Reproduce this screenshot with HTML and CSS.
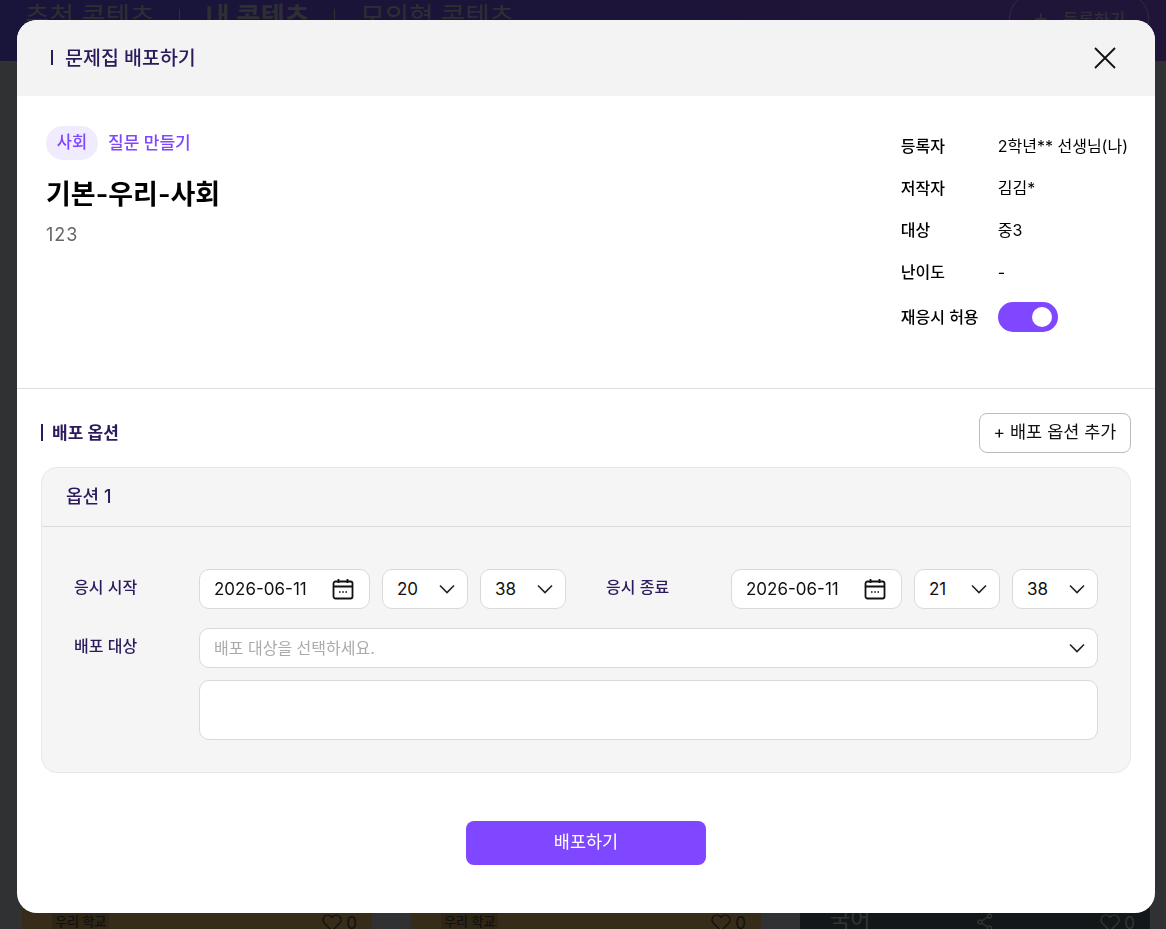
FILE: index.html
```html
<!DOCTYPE html>
<html lang="ko">

<head>
  <meta charset="UTF-8">
  <meta name="viewport" content="width=device-width, initial-scale=1.0">
  <title>문제집 배포하기</title>
  <link rel="stylesheet" href="styles.css">
</head>

<body>
  <!-- page behind the modal -->
  <div class="page">
    <div class="topbar">
      <div class="tabs">
        <span class="tab">추천 콘텐츠</span>
        <span class="tab_line"></span>
        <span class="tab tab_on">내 콘텐츠</span>
        <span class="tab_line"></span>
        <span class="tab">모의형 콘텐츠</span>
      </div>
      <div class="add_btn"><span class="add_plus">+</span>등록하기</div>
    </div>

    <div class="cards">
      <div class="card card_yellow">
        <span class="chip">우리 학교</span>
        <span class="likes">
          <svg width="20" height="18" viewBox="0 0 20 18"><path d="M10 17 2.4 9.3a4.8 4.8 0 0 1 6.8-6.8l.8.8.8-.8a4.8 4.8 0 0 1 6.8 6.8z" fill="none" stroke="#111" stroke-width="1.4"/></svg>
          0
        </span>
      </div>
      <div class="card card_yellow">
        <span class="chip">우리 학교</span>
        <span class="likes">
          <svg width="20" height="18" viewBox="0 0 20 18"><path d="M10 17 2.4 9.3a4.8 4.8 0 0 1 6.8-6.8l.8.8.8-.8a4.8 4.8 0 0 1 6.8 6.8z" fill="none" stroke="#111" stroke-width="1.4"/></svg>
          0
        </span>
      </div>
      <div class="card card_dark">
        <span class="subject">국어</span>
        <svg class="share" width="16" height="18" viewBox="0 0 16 18"><circle cx="12.5" cy="3" r="2" fill="none" stroke="#333" stroke-width="1.4"/><circle cx="3" cy="9" r="2" fill="none" stroke="#333" stroke-width="1.4"/><circle cx="12.5" cy="15" r="2" fill="none" stroke="#333" stroke-width="1.4"/><path d="M4.8 8 10.7 4M4.8 10l5.9 4" stroke="#333" stroke-width="1.4"/></svg>
        <span class="likes likes_dark">
          <svg width="20" height="18" viewBox="0 0 20 18"><path d="M10 17 2.4 9.3a4.8 4.8 0 0 1 6.8-6.8l.8.8.8-.8a4.8 4.8 0 0 1 6.8 6.8z" fill="none" stroke="#333" stroke-width="1.4"/></svg>
          0
        </span>
      </div>
    </div>
  </div>

  <div class="modal">
    <div class="modal_head">
      <h1 class="modal_title"><span class="lift">문제집 배포하기</span></h1>
      <svg class="close" width="22" height="22" viewBox="0 0 22 22"><path d="M1 1 21 21M21 1 1 21" stroke="#111" stroke-width="1.8"/></svg>
    </div>

    <div class="info">
      <div class="info_left">
        <div class="tags">
          <span class="tag">사회</span>
          <span class="tag_text lift">질문 만들기</span>
        </div>
        <h2 class="book_name">기본-우리-사회</h2>
        <p class="book_desc">123</p>
      </div>
      <div class="meta">
        <span class="meta_key">등록자</span><span class="meta_val">2학년** 선생님(나)</span>
        <span class="meta_key">저작자</span><span class="meta_val">김김*</span>
        <span class="meta_key">대상</span><span class="meta_val">중3</span>
        <span class="meta_key">난이도</span><span class="meta_val">-</span>
        <span class="meta_key">재응시 허용</span><span class="toggle"><span class="knob"></span></span>
      </div>
    </div>

    <div class="options">
      <div class="options_head">
        <h3 class="options_title"><span class="lift">배포 옵션</span></h3>
        <button class="option_add" type="button">+ 배포 옵션 추가</button>
      </div>

      <div class="option_box">
        <div class="option_name">옵션 1</div>
        <div class="option_body">
          <div class="form_row">
            <span class="form_label">응시 시작</span>
            <div class="field field_date">2026-06-11
              <svg width="22" height="22" viewBox="0 0 22 22"><rect x="1.5" y="3.5" width="19" height="17" rx="2" fill="none" stroke="#111" stroke-width="1.8"/><path d="M1.5 8.5h19M6.5 1v4M15.5 1v4" stroke="#111" stroke-width="1.8"/><path d="M7 14h1.6M10.2 14h1.6M13.4 14H15" stroke="#111" stroke-width="1.5"/></svg>
            </div>
            <div class="field field_time">20
              <svg width="16" height="10" viewBox="0 0 16 10"><path d="M1 1.5 8 8.5l7-7" fill="none" stroke="#222" stroke-width="1.6"/></svg>
            </div>
            <div class="field field_time">38
              <svg width="16" height="10" viewBox="0 0 16 10"><path d="M1 1.5 8 8.5l7-7" fill="none" stroke="#222" stroke-width="1.6"/></svg>
            </div>
            <span class="form_label form_label_end">응시 종료</span>
            <div class="field field_date">2026-06-11
              <svg width="22" height="22" viewBox="0 0 22 22"><rect x="1.5" y="3.5" width="19" height="17" rx="2" fill="none" stroke="#111" stroke-width="1.8"/><path d="M1.5 8.5h19M6.5 1v4M15.5 1v4" stroke="#111" stroke-width="1.8"/><path d="M7 14h1.6M10.2 14h1.6M13.4 14H15" stroke="#111" stroke-width="1.5"/></svg>
            </div>
            <div class="field field_time">21
              <svg width="16" height="10" viewBox="0 0 16 10"><path d="M1 1.5 8 8.5l7-7" fill="none" stroke="#222" stroke-width="1.6"/></svg>
            </div>
            <div class="field field_time">38
              <svg width="16" height="10" viewBox="0 0 16 10"><path d="M1 1.5 8 8.5l7-7" fill="none" stroke="#222" stroke-width="1.6"/></svg>
            </div>
          </div>

          <div class="form_row form_row_target">
            <span class="form_label">배포 대상</span>
            <div class="target_col">
              <div class="field field_target"><span class="lift">배포 대상을 선택하세요.</span>
                <svg width="16" height="10" viewBox="0 0 16 10"><path d="M1 1.5 8 8.5l7-7" fill="none" stroke="#222" stroke-width="1.6"/></svg>
              </div>
              <div class="target_list"></div>
            </div>
          </div>
        </div>
      </div>
    </div>

    <div class="modal_foot">
      <button class="submit" type="button">배포하기</button>
    </div>
  </div>
</body>

</html>
```

FILE: styles.css
```css
* {
  box-sizing: border-box;
}

html,
body {
  margin: 0;
  height: 100%;
  overflow: hidden;
}

body {
  font-family: Inter, "Noto Sans CJK KR", sans-serif;
  background-color: #2f3133;
  color: #000;
}

h1,
h2,
h3,
p {
  margin: 0;
}

/* text sits a little high in its line */
.lift {
  padding-bottom: 3px;
}

/* page behind */
.page {
  height: 929px;
  display: flex;
  flex-direction: column;
  justify-content: space-between;
  overflow: hidden;
}

.topbar {
  height: 61px;
  flex: none;
  display: flex;
  justify-content: space-between;
  align-items: flex-start;
  padding: 3px 17px 0 25px;
  background: linear-gradient(90deg, #18143a, #201538);
  color: #2f2e33;
}

.tabs {
  display: flex;
  align-items: center;
  gap: 25px;
}

.tab {
  font-size: 26.5px;
  line-height: 26px;
}

.tab_on {
  font-weight: 700;
}

.tab_line {
  width: 1px;
  height: 15px;
  background-color: #2f2e33;
}

.add_btn {
  width: 140px;
  height: 48px;
  margin-top: -9px;
  padding-top: 12px;
  border: 1px solid #2f2e38;
  border-radius: 24px;
  text-align: center;
  font-size: 17px;
  line-height: 22px;
  font-weight: 500;
}

.add_plus {
  font-size: 24px;
  font-weight: 400;
  margin-right: 14px;
}

.cards {
  height: 30px;
  flex: none;
  display: flex;
  gap: 39px;
  padding-left: 22px;
}

.card {
  width: 350px;
  height: 60px;
  flex: none;
  display: flex;
  align-items: flex-start;
  justify-content: space-between;
  padding: 14px 15px 0 30px;
}

.card_yellow {
  background-color: #372c19;
}

.card_dark {
  background-color: #12181a;
  color: #333;
}

.chip {
  height: 18px;
  padding: 0 3px;
  font-size: 13px;
  line-height: 16px;
  font-weight: 500;
  color: #111;
  background-color: #2f2615;
}

.likes {
  display: flex;
  align-items: center;
  gap: 4px;
  height: 18px;
  margin-top: 1px;
  font-size: 17px;
  color: #111;
}

.likes_dark {
  color: #333;
}

.subject {
  font-size: 22px;
  line-height: 24px;
  margin-top: -6px;
}

.share {
  margin-top: 0;
}

/* modal */
.modal {
  position: fixed;
  left: 17px;
  top: 20px;
  width: 1138px;
  height: 893px;
  background-color: #fff;
  border-radius: 20px;
  overflow: hidden;
}

.modal_head {
  height: 76px;
  display: flex;
  align-items: center;
  justify-content: space-between;
  padding: 0 39px 0 34px;
  background-color: #f3f3f3;
}

.modal_title {
  display: flex;
  align-items: center;
  gap: 12px;
  font-size: 19.5px;
  font-weight: 500;
  color: #2c1a5c;
}

.modal_title::before {
  content: "";
  width: 2px;
  height: 15px;
  margin-top: -2px;
  background-color: #2c1a5c;
}

.close {
  flex: none;
}

.info {
  height: 293px;
  display: flex;
  justify-content: space-between;
  padding: 30px 27px 0 29px;
  border-bottom: 1px solid #ddd;
}

.tags {
  display: flex;
  align-items: center;
  gap: 10px;
}

.tag {
  width: 52px;
  height: 34px;
  border-radius: 17px;
  background-color: #f1ebff;
  color: #7f47ff;
  text-align: center;
  font-size: 16.5px;
  font-weight: 500;
  line-height: 32px;
}

.tag_text {
  color: #7f47ff;
  font-size: 17px;
  font-weight: 500;
}

.book_name {
  margin-top: 16px;
  font-size: 27px;
  line-height: 38px;
  font-weight: 600;
}

.book_desc {
  margin-top: 9px;
  font-size: 18px;
  line-height: 24px;
  letter-spacing: 1px;
  color: #666;
}

.meta {
  display: grid;
  grid-template-columns: 97px auto;
  grid-auto-rows: min-content;
  row-gap: 18px;
  align-items: center;
  padding-top: 8px;
  font-size: 16px;
  line-height: 24px;
}

.meta_key {
  font-weight: 500;
}

.toggle {
  width: 60px;
  height: 30px;
  display: flex;
  align-items: center;
  justify-content: flex-end;
  padding-right: 6px;
  border-radius: 15px;
  background-color: #7f47ff;
}

.knob {
  width: 20px;
  height: 20px;
  border-radius: 50%;
  background-color: #fff;
}

.options {
  padding: 24px 24px 0;
}

.options_head {
  display: flex;
  align-items: center;
  justify-content: space-between;
  height: 40px;
  margin-bottom: 14px;
}

.options_title {
  display: flex;
  align-items: center;
  gap: 9px;
  font-size: 17px;
  font-weight: 600;
  color: #2c1a5c;
}

.options_title::before {
  content: "";
  width: 2px;
  height: 17px;
  margin-top: -1px;
  background-color: #2c1a5c;
}

.option_add {
  width: 152px;
  height: 40px;
  padding: 0 0 6px;
  border: 1px solid #bbb;
  border-radius: 8px;
  background-color: #fff;
  font-family: inherit;
  font-size: 17.5px;
  color: #111;
}

.option_box {
  height: 306px;
  border: 1px solid #e8e8e8;
  border-radius: 16px;
  background-color: #f5f5f5;
}

.option_name {
  height: 59px;
  padding-left: 24px;
  border-bottom: 1px solid #ddd;
  font-size: 18px;
  font-weight: 500;
  line-height: 57px;
  color: #2c1a5c;
}

.option_body {
  padding: 42px 32px 0;
}

.form_row {
  display: flex;
  gap: 12px;
  align-items: flex-start;
}

.form_row_target {
  gap: 0;
  margin-top: 19px;
}

.form_label {
  width: 113px;
  flex: none;
  font-size: 16px;
  font-weight: 500;
  line-height: 37px;
  color: #2c1a5c;
}

.form_row_target .form_label {
  width: 125px;
}

.form_label_end {
  margin-left: 28px;
}

.field {
  height: 40px;
  flex: none;
  display: flex;
  align-items: center;
  justify-content: space-between;
  border: 1px solid #d9d9d9;
  border-radius: 10px;
  background-color: #fff;
  font-size: 17px;
  color: #111;
}

.field_date {
  width: 171px;
  padding: 0 15px 0 14px;
}

.field_time {
  width: 86px;
  padding: 0 12px 0 14px;
}

.target_col {
  flex: 1;
  display: flex;
  flex-direction: column;
  gap: 12px;
}

.field_target {
  width: 100%;
  padding: 0 12px 0 14px;
  font-size: 16px;
  color: #aaa;
}

.target_list {
  height: 60px;
  border: 1px solid #d9d9d9;
  border-radius: 10px;
  background-color: #fff;
}

.modal_foot {
  display: flex;
  justify-content: center;
  padding-top: 48px;
}

.submit {
  width: 240px;
  height: 44px;
  padding: 0 0 6px;
  border: 0;
  border-radius: 8px;
  background-color: #7f47ff;
  font-family: inherit;
  font-size: 17.5px;
  color: #fff;
}
```
